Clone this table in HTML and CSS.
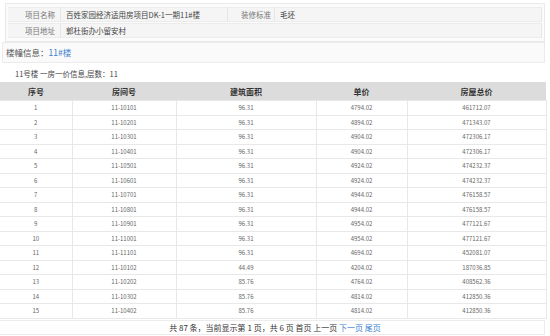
FILE: index.html
```html
<!DOCTYPE html>
<html lang="zh-CN">
<head>
<meta charset="utf-8">
<title>一房一价</title>
<link rel="stylesheet" href="styles.css">
</head>
<body>
<div class="page">
  <div class="info">
    <table class="info-table">
      <colgroup>
        <col class="ic1"><col class="ic2"><col class="ic3"><col>
      </colgroup>
      <tr>
        <td class="lbl">项目名称</td>
        <td class="val">百姓家园经济适用房项目DK-1一期11#楼</td>
        <td class="lbl lbl2">装修标准</td>
        <td class="val">毛坯</td>
      </tr>
      <tr>
        <td class="lbl">项目地址</td>
        <td class="val" colspan="3">郭杜街办小留安村</td>
      </tr>
    </table>
  </div>
  <div class="floor">楼幢信息：<span class="link">11#楼</span></div>
  <div class="title">11号楼 一房一价信息,层数：11</div>
  <table class="grid">
    <colgroup>
      <col class="c1"><col class="c2"><col class="c3"><col class="c4"><col class="c5">
    </colgroup>
    <thead>
      <tr><th>序号</th><th>房间号</th><th>建筑面积</th><th>单价</th><th>房屋总价</th></tr>
    </thead>
    <tbody>
      <tr><td>1</td><td>11-10101</td><td>96.31</td><td>4794.02</td><td>461712.07</td></tr>
      <tr><td>2</td><td>11-10201</td><td>96.31</td><td>4894.02</td><td>471343.07</td></tr>
      <tr><td>3</td><td>11-10301</td><td>96.31</td><td>4904.02</td><td>472306.17</td></tr>
      <tr><td>4</td><td>11-10401</td><td>96.31</td><td>4904.02</td><td>472306.17</td></tr>
      <tr><td>5</td><td>11-10501</td><td>96.31</td><td>4924.02</td><td>474232.37</td></tr>
      <tr><td>6</td><td>11-10601</td><td>96.31</td><td>4924.02</td><td>474232.37</td></tr>
      <tr><td>7</td><td>11-10701</td><td>96.31</td><td>4944.02</td><td>476158.57</td></tr>
      <tr><td>8</td><td>11-10801</td><td>96.31</td><td>4944.02</td><td>476158.57</td></tr>
      <tr><td>9</td><td>11-10901</td><td>96.31</td><td>4954.02</td><td>477121.67</td></tr>
      <tr><td>10</td><td>11-11001</td><td>96.31</td><td>4954.02</td><td>477121.67</td></tr>
      <tr><td>11</td><td>11-11101</td><td>96.31</td><td>4694.02</td><td>452081.07</td></tr>
      <tr><td>12</td><td>11-10102</td><td>44.49</td><td>4204.02</td><td>187036.85</td></tr>
      <tr><td>13</td><td>11-10202</td><td>85.76</td><td>4764.02</td><td>408562.36</td></tr>
      <tr><td>14</td><td>11-10302</td><td>85.76</td><td>4814.02</td><td>412850.36</td></tr>
      <tr><td>15</td><td>11-10402</td><td>85.76</td><td>4814.02</td><td>412850.36</td></tr>
    </tbody>
  </table>
  <div class="pager">共 87 条，当前显示第 1 页，共 6 页 首页 上一页 <span class="link">下一页</span> <span class="link">尾页</span></div>
</div>
</body>
</html>
```
FILE: styles.css
```css
html, body {
  margin: 0;
  padding: 0;
  background: #ffffff;
}
body {
  font-family: "Noto Sans CJK SC", "Noto Sans", sans-serif;
  color: #333;
}
.page {
  width: 550px;
  height: 336px;
  overflow: hidden;
  padding-top: 3px;
  box-sizing: border-box;
}
.info {
  margin: 0 5px 0 5px;
  border: 1px solid #e9e9e9;
  padding: 2px;
  background: #fbfbfb;
}
.info-table {
  width: 100%;
  border-collapse: separate;
  border-spacing: 0 1px;
  table-layout: fixed;
  font-size: 7.5px;
}
.ic1 { width: 53px; }
.ic2 { width: 166px; }
.ic3 { width: 48px; }
.info-table td {
  height: 13px;
  padding: 0;
  background: #f5f5f5;
  border-top: 1px solid #ececec;
  border-bottom: 1px solid #ececec;
  line-height: 13px;
  white-space: nowrap;
  overflow: hidden;
}
.info-table .lbl {
  text-align: right;
  padding-right: 5px;
  color: #777;
  border-right: 1px solid #e6e6e6;
}
.info-table .lbl2 {
  border-left: 1px solid #e6e6e6;
  padding-right: 3px;
}
.info-table .val {
  padding-left: 5px;
  color: #444;
}
.info-table td:last-child {
  border-right: 1px solid #e6e6e6;
}
.floor {
  margin: 0 5px 0 2px;
  height: 19px;
  line-height: 19px;
  border: 1px solid #ebebeb;
  background: #fafafa;
  padding-left: 3px;
  font-size: 8.5px;
  color: #555;
}
.link {
  color: #3d7fd0;
}
.title {
  height: 16px;
  line-height: 16px;
  padding-top: 3px;
  padding-left: 15px;
  font-size: 7.5px;
  color: #444;
}
.grid {
  width: 546px;
  border-collapse: collapse;
  table-layout: fixed;
}
.c1 { width: 72px; }
.c2 { width: 104px; }
.c3 { width: 140px; }
.c4 { width: 91px; }
.c5 { width: 139px; }
.grid th {
  height: 18px;
  padding: 0;
  background: #dcdcdc;
  font-size: 8px;
  font-weight: bold;
  color: #333;
  text-align: center;
}
.grid td {
  height: 13.5px;
  padding: 0;
  border: 1px solid #e8e8e8;
  font-size: 6px;
  color: #666;
  text-align: center;
  line-height: 13px;
}
.grid td:first-child { border-left: none; }
.pager {
  margin: 1px 5px 0 0;
  height: 13px;
  line-height: 13px;
  border: 1px solid #ececec;
  border-left: none;
  font-size: 8px;
  text-align: center;
  color: #333;
  padding-left: 6px;
}
```
